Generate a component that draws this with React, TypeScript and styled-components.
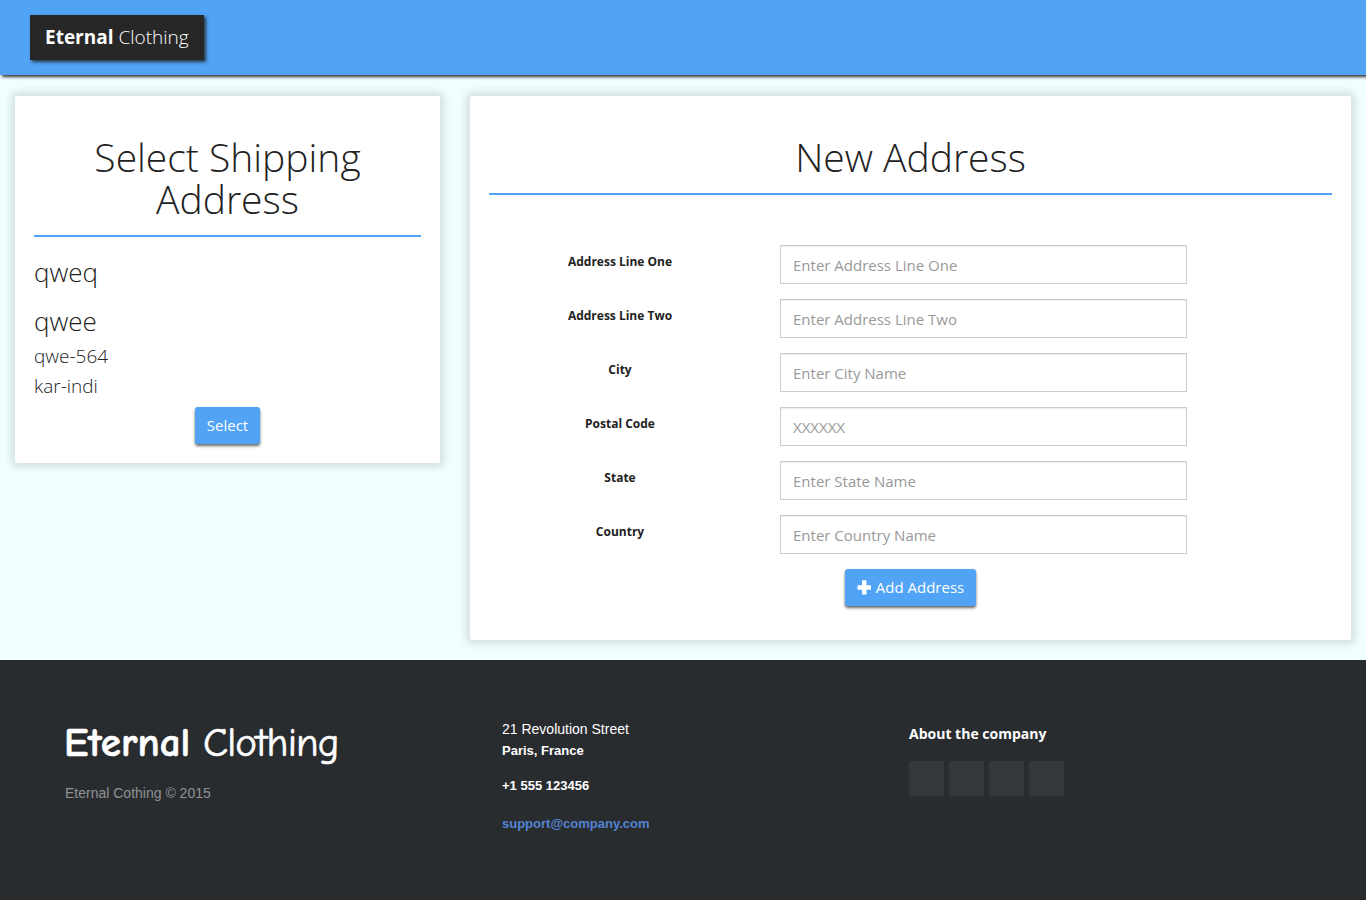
import React from 'react';
import styled, { createGlobalStyle } from 'styled-components';

const Global = createGlobalStyle`
  * { box-sizing: border-box; }
  body { margin: 0; background: #f2ffff; color: #222; font: 300 15px/1.4 "Open Sans", sans-serif; overflow: hidden; }
`;
const Page = styled.div`height: 900px; overflow: hidden; display: flex; flex-direction: column;`;
const Header = styled.header`
  height: 75px; flex: none; background: #50a3f5; padding: 15px 30px; box-shadow: 2px 2px 3px #333;
`;
const Brand = styled.div`
  width: 174px; height: 45px; background: #272727; color: #fff; padding-left: 15px;
  font-size: 19px; line-height: 44px; font-weight: 300; white-space: nowrap; box-shadow: 2px 2px 3px rgba(30,30,30,.8);
  b { font-weight: 700; }
`;
const Main = styled.main`
  height: 585px; flex: none; padding: 21px 15px 0; display: flex; align-items: flex-start; gap: 30px;
`;
const Card = styled.section<{ $w: number; $h: number }>`
  width: ${p => p.$w}px; height: ${p => p.$h}px; flex: none; background: #fff; padding: 40px 19px 0;
  border-radius: 2px; box-shadow: 0 0 8px 4px #d3e0e0;
`;
const Title = styled.h1`
  margin: 0; padding-bottom: 15px; border-bottom: 2px solid #50a3f5; text-align: center;
  font-size: 39px; line-height: 42px; font-weight: 300;
`;
const Line = styled.div<{ $size: number; $h: number }>`
  font-size: ${p => p.$size}px; height: ${p => p.$h}px; line-height: ${p => p.$h}px;
`;
const Address = styled.div`height: 170px;`;
const Button = styled.button<{ $w: number }>`
  display: flex; align-items: center; justify-content: center; gap: 4px; width: ${p => p.$w}px; height: 37px;
  margin: 0 auto; padding: 0 0 1px; border: 0; border-radius: 3px; background: #50a3f5; color: #fff;
  font: 400 15px "Open Sans", sans-serif; box-shadow: 0 2px 3px #666; white-space: nowrap;
`;
const Form = styled.form`padding-top: 50px;`;
const Field = styled.label`
  display: flex; height: 39px; margin-bottom: 15px; padding-left: 1px;
`;
const Label = styled.span`width: 260px; margin-right: 30px; text-align: center; font-size: 12px; font-weight: 700; line-height: 33px;`;
const Input = styled.input`
  width: 407px; height: 39px; border: 1px solid #ccc; border-radius: 0; padding: 0 12px; outline: none;
  font: 400 15px "Open Sans", sans-serif; box-shadow: inset 0 1px 1px rgba(0,0,0,.075);
  &::placeholder { color: #999; opacity: 1; }
`;
const Footer = styled.footer`
  height: 240px; flex: none; display: flex; background: #292c2f; color: #fff; padding: 59px 65px 0;
  border-bottom: 1px solid #272727; font: 14px/20px "Liberation Sans", Arial, sans-serif;
`;
const Col = styled.div<{ $w: number }>`width: ${p => p.$w}px; flex: none;`;
const Logo = styled.div`
  margin-left: -1px; font: 400 41px/48px "Comic Sans MS", "Comic Neue", cursive; white-space: nowrap;
  letter-spacing: -0.9px; font-variant-ligatures: none; -webkit-text-stroke: 0.6px #fff;
  b { font-weight: 700; letter-spacing: 0; }
`;
const Copyright = styled.p`margin: 16px 0 0; color: #8f9296;`;
const Contact = styled.p<{ $bold?: boolean; $gap?: number; $link?: boolean }>`
  margin: ${p => p.$gap || 0}px 0 0; line-height: 21px; font-weight: ${p => p.$bold ? 700 : 400};
  color: ${p => p.$link ? '#5383d3' : '#fff'}; font-size: ${p => p.$bold ? 13 : 14}px;
`;
const About = styled.h2`margin: 5px 0 17px; font: 700 14px/20px "Open Sans", sans-serif;`;
const Socials = styled.div`display: flex; gap: 5px;`;
const Social = styled.span`width: 35px; height: 35px; background: #33383b; border-radius: 2px;`;

const fields = [
  ['Address Line One', 'Enter Address Line One'], ['Address Line Two', 'Enter Address Line Two'],
  ['City', 'Enter City Name'], ['Postal Code', 'XXXXXX'], ['State', 'Enter State Name'], ['Country', 'Enter Country Name'],
];

export default function App() {
  return (
    <Page>
      <Global />
      <Header><Brand><b>Eternal</b> Clothing</Brand></Header>
      <Main>
        <Card $w={425} $h={367}>
          <Title>Select Shipping Address</Title>
          <Address>
            <Line $size={26} $h={70}>qweq</Line>
            <Line $size={26} $h={28}>qwee</Line>
            <Line $size={19} $h={43}>qwe-564</Line>
            <Line $size={19} $h={17}>kar-indi</Line>
          </Address>
          <Button $w={65}>Select</Button>
        </Card>
        <Card $w={881} $h={544}>
          <Title>New Address</Title>
          <Form>
            {fields.map(([l, p]) => <Field key={l}><Label>{l}</Label><Input placeholder={p} /></Field>)}
            <Button $w={131} type="button">
              <svg width="15" height="15" viewBox="0 0 15 15"><path d="M5.500 .3h3.500q.5 0 .5.5v4.400H13.500q.5 0 .5.5v3.500q0 .5-.5.5H9.500V14q0 .5-.5.5H5.500q-.5 0-.5-.5V9.700H1q-.5 0-.5-.5V5.700q0-.5.5-.5h4V.8q0-.5.5-.5z" fill="#fff" /></svg>
              Add Address
            </Button>
          </Form>
        </Card>
      </Main>
      <Footer>
        <Col $w={437}><Logo><b>Eternal</b> Clothing</Logo><Copyright>Eternal Cothing © 2015</Copyright></Col>
        <Col $w={407}>
          <Contact>21 Revolution Street</Contact>
          <Contact $bold>Paris, France</Contact>
          <Contact $bold $gap={14}>+1 555 123456</Contact>
          <Contact $bold $gap={17} $link>support@company.com</Contact>
        </Col>
        <Col $w={300}><About>About the company</About><Socials><Social /><Social /><Social /><Social /></Socials></Col>
      </Footer>
    </Page>
  );
}
